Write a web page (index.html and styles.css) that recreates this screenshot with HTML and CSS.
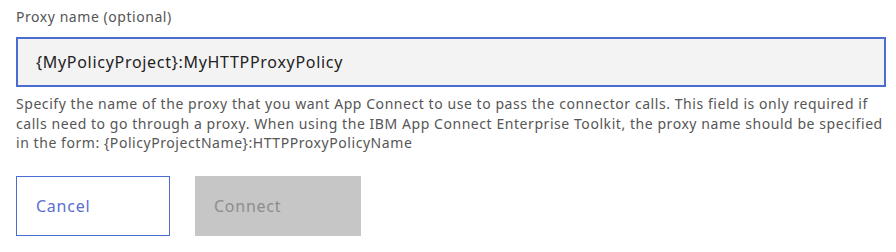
FILE: index.html
```html
<!DOCTYPE html>
<html lang="en">
<head>
    <meta charset="UTF-8">
    <meta name="viewport" content="width=device-width, initial-scale=1.0">
    <title>Proxy name</title>
    <link rel="stylesheet" href="styles.css">
</head>
<body>
    <div class="form">
        <label class="label" for="proxy">Proxy name (optional)</label>
        <input class="field" id="proxy" type="text" value="{MyPolicyProject}:MyHTTPProxyPolicy">
        <p class="helper">Specify the name of the proxy that you want App Connect to use to pass the connector calls. This field is only required if calls need to go through a proxy. When using the IBM App Connect Enterprise Toolkit, the proxy name should be specified in the form: {PolicyProjectName}:HTTPProxyPolicyName</p>
        <div class="actions">
            <button class="btn btn-secondary">Cancel</button>
            <button class="btn btn-disabled" disabled>Connect</button>
        </div>
    </div>
</body>
</html>
```

FILE: styles.css
```css
body {
    margin: 0;
    background-color: #fff;
    font-family: "Noto Sans", "Open Sans", sans-serif;
}
.form {
    padding: 8px 10px 0 16px;
}
.label {
    display: block;
    font-size: 14px;
    line-height: 18px;
    letter-spacing: 0.55px;
    color: #555;
    margin-bottom: 11px;
}
.field {
    display: block;
    box-sizing: border-box;
    width: 870px;
    height: 50px;
    margin: 0;
    padding: 0 18px;
    border: 2px solid #4b6cd0;
    background-color: #f3f3f3;
    font-family: inherit;
    font-size: 16px;
    letter-spacing: 0.7px;
    color: #222;
    outline: none;
}
.helper {
    margin: 7px 0 0;
    font-size: 14px;
    line-height: 19.5px;
    letter-spacing: 0.56px;
    color: #565656;
}
.actions {
    display: flex;
    gap: 25px;
    margin-top: 23px;
}
.btn {
    box-sizing: border-box;
    height: 60px;
    padding: 0 19px;
    text-align: left;
    font-family: inherit;
    font-size: 16px;
    letter-spacing: 0.75px;
    cursor: pointer;
}
.btn-secondary {
    width: 154px;
    background-color: #fff;
    border: 1px solid #4b6cd0;
    color: #5a6fd2;
}
.btn-disabled {
    width: 166px;
    background-color: #c6c6c6;
    border: none;
    color: #8d8d8d;
    cursor: default;
}
```
